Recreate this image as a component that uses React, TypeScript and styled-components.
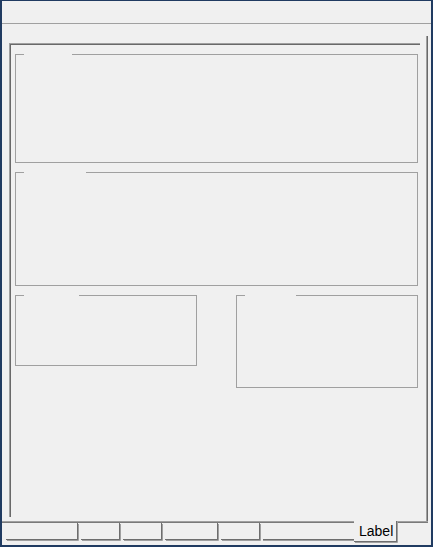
import styled, { createGlobalStyle } from 'styled-components';

const GlobalStyle = createGlobalStyle`
  html, body {
    margin: 0;
    padding: 0;
    background: #f0f0f0;
  }

  body {
    font-family: 'Liberation Sans', Arial, sans-serif;
  }
`;

const tabs = [
  { width: 72, edge: true },
  { width: 39, edge: true },
  { width: 39, edge: true },
  { width: 53, edge: true },
  { width: 39, edge: true },
  { width: 91, edge: false },
];

export default function App() {
  return (
    <>
      <GlobalStyle />
      <Frame>
        <Header />
        <Main>
          <Panel>
            <GroupBox $height={109}>
              <Caption $width={48} />
            </GroupBox>
            <GroupBox $height={114}>
              <Caption $width={62} />
            </GroupBox>
            <GroupRow>
              <GroupBox $height={71} $width={182}>
                <Caption $width={55} />
              </GroupBox>
              <GroupBox $height={93} $width={182}>
                <Caption $width={51} />
              </GroupBox>
            </GroupRow>
          </Panel>
          <Rail />
        </Main>
        <TabStrip>
          {tabs.map((t, i) => (
            <Tab key={i} $width={t.width} $edge={t.edge} $first={i === 0} />
          ))}
          <SelectedTab>Label</SelectedTab>
        </TabStrip>
      </Frame>
    </>
  );
}

// Styles
const Frame = styled.div`
  width: 433px;
  height: 547px;
  box-sizing: border-box;
  border: 2px solid #203b61;
  border-top-width: 1px;
  background: #f0f0f0;
  display: flex;
  flex-direction: column;
  overflow: hidden;
`;

const Header = styled.div`
  flex: none;
  height: 22px;
  border-bottom: 1px solid #a0a0a0;
`;

const Main = styled.div`
  flex: 1;
  min-height: 0;
  display: flex;
  align-items: flex-start;
`;

const Panel = styled.div`
  flex: none;
  width: 411px;
  height: 474px;
  box-sizing: border-box;
  margin: 19px 0 0 7px;
  padding: 10px 2px 0 5px;
  border-left: 1px solid #a0a0a0;
  border-top: 1px solid #a0a0a0;
  box-shadow: inset 1px 1px 0 #696969;
  display: flex;
  flex-direction: column;
  gap: 9px;
`;

const GroupBox = styled.div<{ $height: number; $width?: number }>`
  position: relative;
  box-sizing: border-box;
  height: ${(p) => p.$height}px;
  ${(p) => (p.$width ? `width: ${p.$width}px;` : '')}
  border: 1px solid #a0a0a0;
`;

const Caption = styled.span<{ $width: number }>`
  position: absolute;
  top: -1px;
  left: 8px;
  height: 1px;
  width: ${(p) => p.$width}px;
  background: #f0f0f0;
`;

const GroupRow = styled.div`
  display: flex;
  justify-content: space-between;
  align-items: flex-start;
`;

const Rail = styled.div`
  flex: none;
  width: 1px;
  height: 485px;
  margin: 12px 0 0 6px;
  border-left: 1px solid #a0a0a0;
  background: #696969;
`;

const TabStrip = styled.div`
  flex: none;
  height: 24px;
  box-sizing: border-box;
  margin-right: 3px;
  padding: 1px 0 0 4px;
  border-top: 1px solid #a0a0a0;
  box-shadow: inset 0 1px 0 #7a7a7a;
  display: flex;
  align-items: flex-start;
`;

const Tab = styled.div<{ $width: number; $edge: boolean; $first: boolean }>`
  flex: none;
  box-sizing: border-box;
  width: ${(p) => p.$width}px;
  height: 17px;
  margin-left: ${(p) => (p.$first ? 0 : 3)}px;
  border-bottom: 1px solid #6e6e6e;
  border-right: ${(p) => (p.$edge ? '1px solid #6e6e6e' : 'none')};
  border-bottom-right-radius: ${(p) => (p.$edge ? 1 : 0)}px;
  box-shadow: ${(p) => (p.$edge ? '1px 1px 0 #a0a0a0' : '0 1px 0 #a0a0a0')};
`;

const SelectedTab = styled.div`
  flex: none;
  box-sizing: border-box;
  width: 43px;
  height: 21px;
  margin-top: -2px;
  padding: 2px 0 0 5px;
  background: #f0f0f0;
  border-right: 1px solid #6e6e6e;
  border-bottom: 1px solid #6e6e6e;
  border-bottom-right-radius: 1px;
  box-shadow: 1px 1px 0 #a0a0a0;
  font-size: 14px;
  line-height: 16px;
  color: #000;
  white-space: nowrap;
`;
